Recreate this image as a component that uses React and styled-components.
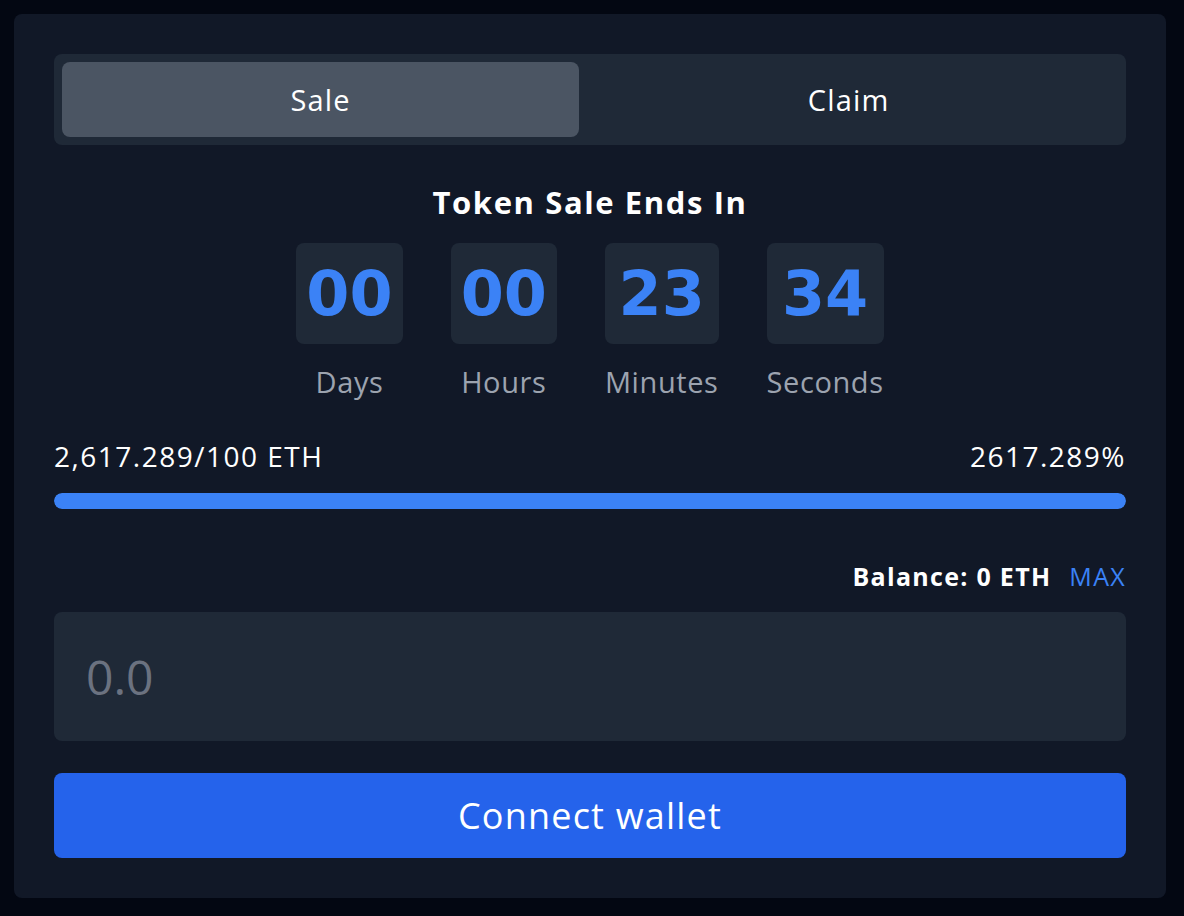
import React, { useState } from "react";
import styled, { createGlobalStyle } from "styled-components";

const GlobalStyle = createGlobalStyle`
  html, body {
    margin: 0;
    padding: 0;
    background: #030712;
  }
  body {
    font-family: "Open Sans", "Lato", sans-serif;
    color: #ffffff;
  }
  * {
    box-sizing: border-box;
  }
`;

const countdown = [
  { value: "00", label: "Days" },
  { value: "00", label: "Hours" },
  { value: "23", label: "Minutes" },
  { value: "34", label: "Seconds" },
];

export default function App() {
  const [tab, setTab] = useState("sale");
  const raised = 2617.289;
  const goal = 100;
  const percent = Math.min((raised / goal) * 100, 100);

  return (
    <>
      <GlobalStyle />
      <Page>
        <Card>
          <Tabs>
            <Tab active={tab === "sale"} onClick={() => setTab("sale")}>
              Sale
            </Tab>
            <Tab active={tab === "claim"} onClick={() => setTab("claim")}>
              Claim
            </Tab>
          </Tabs>

          <Title>Token Sale Ends In</Title>
          <Countdown>
            {countdown.map(item => (
              <Unit key={item.label}>
                <UnitBox>{item.value}</UnitBox>
                <UnitLabel>{item.label}</UnitLabel>
              </Unit>
            ))}
          </Countdown>

          <ProgressInfo>
            <span>2,617.289/100 ETH</span>
            <span>2617.289%</span>
          </ProgressInfo>
          <Track>
            <Fill style={{ width: `${percent}%` }} />
          </Track>

          <BalanceRow>
            <strong>Balance: 0 ETH</strong>
            <MaxButton>MAX</MaxButton>
          </BalanceRow>
          <AmountInput placeholder="0.0" />
          <ConnectButton>Connect wallet</ConnectButton>
        </Card>
      </Page>
    </>
  );
}

const Page = styled.div`
  min-height: 916px;
  padding: 14px 18px 18px 14px;
`;

const Card = styled.div`
  background: #111827;
  border-radius: 8px;
  padding: 40px;
  display: flex;
  flex-direction: column;
`;

const Tabs = styled.div`
  display: flex;
  background: #1f2937;
  border-radius: 8px;
  padding: 8px;
`;

const Tab = styled.button`
  flex: 1 1 auto;
  height: 75px;
  border: none;
  border-radius: 8px;
  background: ${props => (props.active ? "#4b5563" : "transparent")};
  color: #ffffff;
  font-family: inherit;
  font-size: 29px;
  letter-spacing: 1.2px;
  cursor: pointer;
`;

const Title = styled.h2`
  margin: 38px 0 0;
  text-align: center;
  font-size: 31px;
  font-weight: 700;
  line-height: 38px;
  letter-spacing: 1.6px;
`;

const Countdown = styled.div`
  display: flex;
  justify-content: center;
  gap: 48px;
  margin-top: 22px;
`;

const Unit = styled.div`
  display: flex;
  flex-direction: column;
  align-items: stretch;
`;

const UnitBox = styled.div`
  background: #1f2937;
  border-radius: 8px;
  padding: 0 10px;
  height: 101px;
  display: flex;
  align-items: center;
  justify-content: center;
  color: #3b82f6;
  font-family: "DejaVu Sans", "Open Sans", sans-serif;
  font-size: 62px;
  font-weight: 700;
`;

const UnitLabel = styled.div`
  margin-top: 20px;
  text-align: center;
  color: #9ca3af;
  font-size: 29px;
  line-height: 36px;
  letter-spacing: 0.6px;
`;

const ProgressInfo = styled.div`
  display: flex;
  justify-content: space-between;
  margin-top: 38px;
  font-size: 28px;
  line-height: 36px;
  letter-spacing: 1.5px;
`;

const Track = styled.div`
  margin-top: 19px;
  height: 16px;
  border-radius: 9999px;
  background: #1f2937;
  overflow: hidden;
`;

const Fill = styled.div`
  height: 100%;
  background: #3b82f6;
  border-radius: 9999px;
`;

const BalanceRow = styled.div`
  display: flex;
  justify-content: flex-end;
  align-items: baseline;
  gap: 18px;
  margin-top: 50px;
  font-size: 25px;
  line-height: 32px;
  letter-spacing: 1.3px;
  strong {
    font-weight: 700;
  }
`;

const MaxButton = styled.button`
  border: none;
  background: none;
  padding: 0;
  color: #3b82f6;
  font-family: inherit;
  font-size: 25px;
  letter-spacing: 1.3px;
  cursor: pointer;
`;

const AmountInput = styled.input`
  margin-top: 19px;
  height: 129px;
  border: none;
  border-radius: 8px;
  background: #1f2937;
  padding: 0 32px;
  color: #ffffff;
  font-family: inherit;
  font-size: 48px;
  outline: none;
  &::placeholder {
    color: #6b7280;
  }
`;

const ConnectButton = styled.button`
  margin-top: 32px;
  height: 85px;
  border: none;
  border-radius: 8px;
  background: #2563eb;
  color: #ffffff;
  font-family: inherit;
  font-size: 36px;
  letter-spacing: 1.2px;
  cursor: pointer;
`;
